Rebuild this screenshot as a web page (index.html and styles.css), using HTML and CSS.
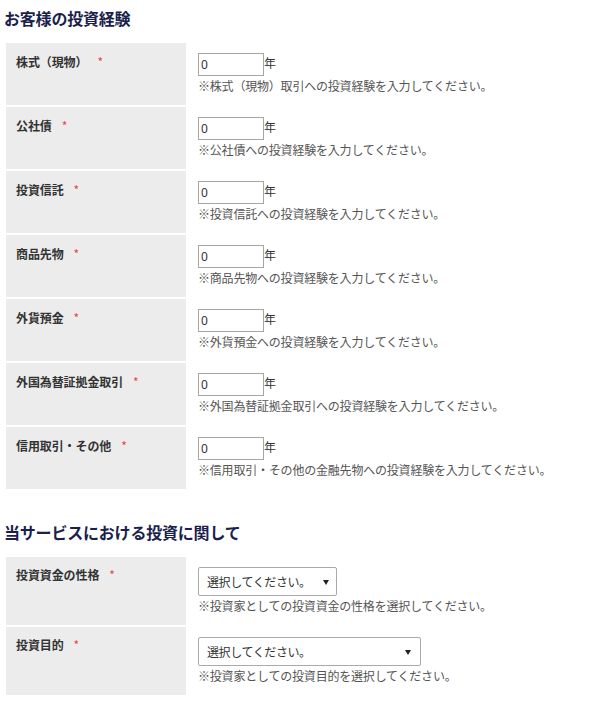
FILE: index.html
```html
<!DOCTYPE html>
<html lang="ja">
<head>
<meta charset="utf-8">
<title>お客様の投資経験</title>
<link rel="stylesheet" href="styles.css">
</head>
<body>
<h2 class="sec-title">お客様の投資経験</h2>
<table class="form-table">
  <tr>
    <th class="label">株式（現物）<span class="req">*</span></th>
    <td class="value">
      <div class="field"><input class="years" type="text" value="0"><span class="unit">年</span></div>
      <p class="hint">※株式（現物）取引への投資経験を入力してください。</p>
    </td>
  </tr>
  <tr>
    <th class="label">公社債<span class="req">*</span></th>
    <td class="value">
      <div class="field"><input class="years" type="text" value="0"><span class="unit">年</span></div>
      <p class="hint">※公社債への投資経験を入力してください。</p>
    </td>
  </tr>
  <tr>
    <th class="label">投資信託<span class="req">*</span></th>
    <td class="value">
      <div class="field"><input class="years" type="text" value="0"><span class="unit">年</span></div>
      <p class="hint">※投資信託への投資経験を入力してください。</p>
    </td>
  </tr>
  <tr>
    <th class="label">商品先物<span class="req">*</span></th>
    <td class="value">
      <div class="field"><input class="years" type="text" value="0"><span class="unit">年</span></div>
      <p class="hint">※商品先物への投資経験を入力してください。</p>
    </td>
  </tr>
  <tr>
    <th class="label">外貨預金<span class="req">*</span></th>
    <td class="value">
      <div class="field"><input class="years" type="text" value="0"><span class="unit">年</span></div>
      <p class="hint">※外貨預金への投資経験を入力してください。</p>
    </td>
  </tr>
  <tr>
    <th class="label">外国為替証拠金取引<span class="req">*</span></th>
    <td class="value">
      <div class="field"><input class="years" type="text" value="0"><span class="unit">年</span></div>
      <p class="hint">※外国為替証拠金取引への投資経験を入力してください。</p>
    </td>
  </tr>
  <tr>
    <th class="label">信用取引・その他<span class="req">*</span></th>
    <td class="value">
      <div class="field"><input class="years" type="text" value="0"><span class="unit">年</span></div>
      <p class="hint">※信用取引・その他の金融先物への投資経験を入力してください。</p>
    </td>
  </tr>
</table>

<h2 class="sec-title sec-title-2">当サービスにおける投資に関して</h2>
<table class="form-table">
  <tr>
    <th class="label label-sel">投資資金の性格<span class="req">*</span></th>
    <td class="value">
      <div class="field field-sel">
        <div class="select-wrap select-short">
          <select class="select"><option>選択してください。</option></select>
          <span class="arrow"></span>
        </div>
      </div>
      <p class="hint">※投資家としての投資資金の性格を選択してください。</p>
    </td>
  </tr>
  <tr>
    <th class="label label-sel">投資目的<span class="req">*</span></th>
    <td class="value">
      <div class="field field-sel">
        <div class="select-wrap select-long">
          <select class="select"><option>選択してください。</option></select>
          <span class="arrow arrow-long"></span>
        </div>
      </div>
      <p class="hint">※投資家としての投資目的を選択してください。</p>
    </td>
  </tr>
</table>
</body>
</html>
```
FILE: styles.css
```css
html, body {
  margin: 0;
  padding: 0;
  background: #ffffff;
}
body {
  padding: 0 4px;
  font-family: "Noto Sans CJK JP", "Noto Sans", sans-serif;
  color: #333333;
  font-size: 12px;
}
.sec-title {
  margin: 6px 0 11px;
  font-size: 16px;
  line-height: 24px;
  font-weight: bold;
  color: #1a1f4d;
  letter-spacing: -0.2px;
}
.sec-title-2 {
  margin-top: 29px;
}
.form-table {
  border-collapse: separate;
  border-spacing: 2px;
  width: 596px;
  table-layout: fixed;
}
.label {
  width: 160px;
  background: #ececec;
  padding: 10px;
  text-align: left;
  vertical-align: top;
  font-size: 12px;
  line-height: 18px;
  font-weight: bold;
  color: #333333;
  letter-spacing: -0.1px;
}
.label-sel {
  padding-top: 9px;
}
.req {
  color: #e8463c;
  font-weight: normal;
  margin-left: 10px;
}
.value {
  padding: 10px;
  vertical-align: top;
}
.field {
  display: flex;
  align-items: flex-start;
  height: 24px;
}
.field-sel {
  height: 30px;
}
.years {
  box-sizing: border-box;
  width: 66px;
  height: 23px;
  margin: 0;
  padding: 0 2px;
  border: 1px solid #a5a5a5;
  border-radius: 0;
  font-family: "Noto Sans", "Open Sans", sans-serif;
  font-size: 12px;
  color: #333333;
  background: #ffffff;
  outline: none;
}
.unit {
  font-size: 12px;
  line-height: 20px;
  color: #333333;
}
.hint {
  margin: 0;
  font-size: 12px;
  line-height: 18px;
  color: #555555;
  letter-spacing: -0.2px;
  white-space: nowrap;
}
.select-wrap {
  position: relative;
  flex: none;
  height: 29px;
}
.select-short {
  width: 139px;
}
.select-long {
  width: 223px;
}
.select {
  -webkit-appearance: none;
  appearance: none;
  display: block;
  box-sizing: border-box;
  width: 100%;
  height: 29px;
  margin: 0;
  padding: 0 0 0 8px;
  border: 1px solid #aaaaaa;
  border-radius: 2px;
  background: #ffffff;
  font-family: "Noto Sans CJK JP", sans-serif;
  font-size: 12px;
  letter-spacing: -0.4px;
  color: #333333;
  outline: none;
}
.arrow {
  position: absolute;
  right: 8px;
  top: 13px;
  width: 0;
  height: 0;
  border-left: 3px solid transparent;
  border-right: 3px solid transparent;
  border-top: 5px solid #222222;
  pointer-events: none;
}
.arrow-long {
  right: 10px;
}
```
